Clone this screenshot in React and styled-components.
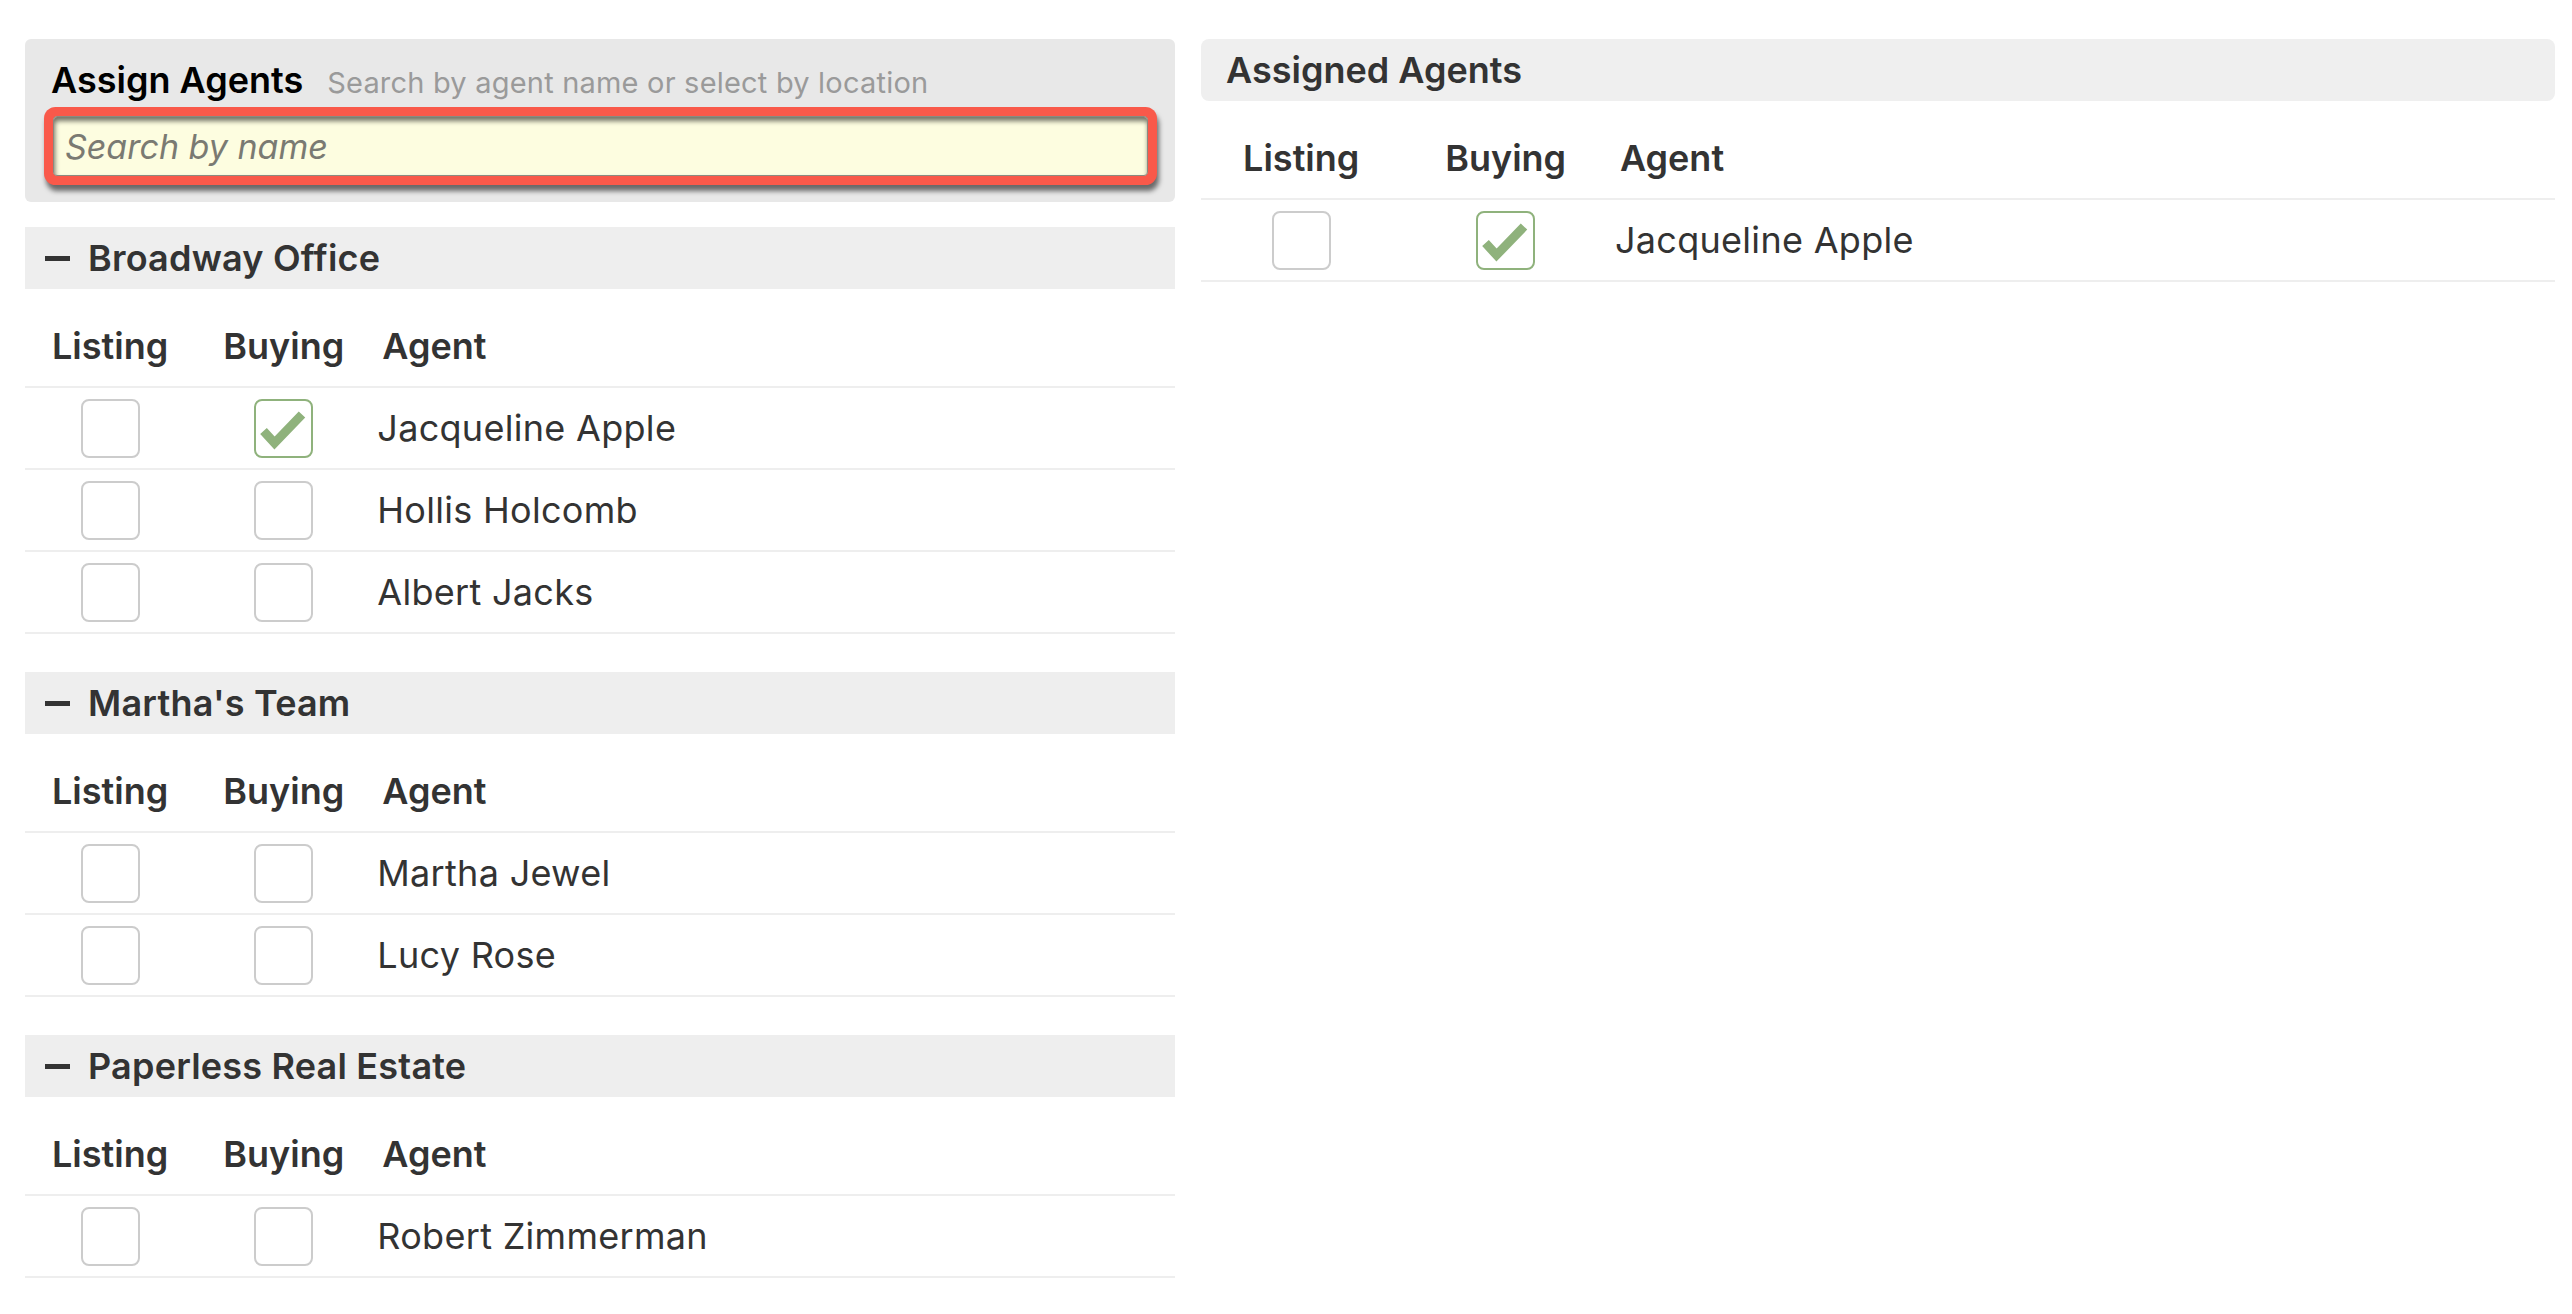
import React from 'react'
import styled, { createGlobalStyle } from 'styled-components'

const groups = [
  {
    name: 'Broadway Office',
    agents: [
      { name: 'Jacqueline Apple', listing: false, buying: true },
      { name: 'Hollis Holcomb', listing: false, buying: false },
      { name: 'Albert Jacks', listing: false, buying: false },
    ],
  },
  {
    name: "Martha's Team",
    agents: [
      { name: 'Martha Jewel', listing: false, buying: false },
      { name: 'Lucy Rose', listing: false, buying: false },
    ],
  },
  {
    name: 'Paperless Real Estate',
    agents: [{ name: 'Robert Zimmerman', listing: false, buying: false }],
  },
]

const assigned = [{ name: 'Jacqueline Apple', listing: false, buying: true }]

const Check = ({ checked }) => (
  <Box checked={checked}>
    {checked && (
      <svg width="55" height="55" viewBox="0 0 55 55">
        <polyline
          points="7.5,30 18.5,42 46,13.5"
          fill="none"
          stroke="#8fb27c"
          strokeWidth="9"
          strokeLinecap="butt"
          strokeLinejoin="miter"
        />
      </svg>
    )}
  </Box>
)

const AgentTable = ({ agents }) => (
  <div>
    <HeadRow>
      <HeadCell center>Listing</HeadCell>
      <HeadCell center>Buying</HeadCell>
      <HeadCell>Agent</HeadCell>
    </HeadRow>
    {agents.map((a) => (
      <Row key={a.name}>
        <Cell>
          <Check checked={a.listing} />
        </Cell>
        <Cell>
          <Check checked={a.buying} />
        </Cell>
        <Name>{a.name}</Name>
      </Row>
    ))}
  </div>
)

const App = () => {
  return (
    <>
      <GlobalStyle />
      <Page>
        <Column>
          <SearchBox>
            <TitleRow>
              <Title>Assign Agents</Title>
              <Hint>Search by agent name or select by location</Hint>
            </TitleRow>
            <SearchInput placeholder="Search by name" />
          </SearchBox>
          {groups.map((g) => (
            <Group key={g.name}>
              <GroupHeader>
                <Minus />
                {g.name}
              </GroupHeader>
              <AgentTable agents={g.agents} />
            </Group>
          ))}
        </Column>
        <Column>
          <AssignedHeader>Assigned Agents</AssignedHeader>
          <AgentTable agents={assigned} />
        </Column>
      </Page>
    </>
  )
}

export default App

const GlobalStyle = createGlobalStyle`
  body {
    margin: 0;
    background: #fff;
    font-family: Inter, "Liberation Sans", sans-serif;
    color: #333;
  }
`

const Page = styled.div`
  display: grid;
  grid-template-columns: 1150px 1fr;
  gap: 26px;
  align-items: start;
  padding: 39px 17px 40px 25px;
`

const Column = styled.div`
  display: flex;
  flex-direction: column;
`

const SearchBox = styled.div`
  background: #e8e8e8;
  border-radius: 6px;
  padding: 21px 27px 26px 28px;
`

const TitleRow = styled.div`
  display: flex;
  align-items: baseline;
  gap: 24px;
  height: 40px;
  line-height: 40px;
`

const Title = styled.span`
  font-size: 36px;
  font-weight: 600;
  color: #000;
  margin-left: -2px;
`

const Hint = styled.span`
  font-size: 29px;
  letter-spacing: 0.2px;
  font-weight: 400;
  color: #9a9a9a;
`

const SearchInput = styled.input`
  display: block;
  box-sizing: border-box;
  width: 100%;
  height: 60px;
  margin-top: 16px;
  padding: 0 11px;
  border: 1px solid #8a8a80;
  border-radius: 4px;
  background: #fdfde0;
  font-family: Inter, "Liberation Sans", sans-serif;
  font-size: 34px;
  box-shadow: inset 1px 4px 5px rgba(0, 0, 0, 0.55), 0 0 0 9px #f9594a,
    2px 6px 5px 9px rgba(0, 0, 0, 0.55);
  outline: none;

  &::placeholder {
    color: #7a7a72;
    font-style: italic;
  }
`

const Group = styled.section`
  margin-top: 38px;

  &:nth-child(2) {
    margin-top: 25px;
  }
`

const GroupHeader = styled.div`
  display: flex;
  align-items: center;
  gap: 18px;
  height: 62px;
  padding-left: 20px;
  background: #eeeeee;
  font-size: 36px;
  letter-spacing: 0.2px;
  font-weight: 600;
  color: #333;
`

const Minus = styled.span`
  width: 25px;
  height: 5px;
  background: #333;
`

const AssignedHeader = styled.div`
  display: flex;
  align-items: center;
  height: 62px;
  padding-left: 25px;
  background: #efefef;
  border-radius: 8px;
  font-size: 36px;
  font-weight: 600;
  color: #333;
`

const HeadRow = styled.div`
  display: grid;
  grid-template-columns: 14.8% 15.4% 1fr;
  padding: 35px 0 18px;
  border-bottom: 2px solid #eeeeee;
  line-height: 44px;
`

const HeadCell = styled.div`
  font-size: 36px;
  font-weight: 600;
  color: #333;
  text-align: ${(p) => (p.center ? 'center' : 'left')};
  padding-left: ${(p) => (p.center ? '0' : '10px')};
`

const Row = styled.div`
  display: grid;
  grid-template-columns: 14.8% 15.4% 1fr;
  align-items: center;
  height: 80px;
  border-bottom: 2px solid #eeeeee;
`

const Cell = styled.div`
  display: flex;
  justify-content: center;
`

const Name = styled.div`
  padding-left: 5px;
  font-size: 36px;
  letter-spacing: 0.3px;
  font-weight: 400;
  color: #333;
`

const Box = styled.div`
  box-sizing: border-box;
  width: 59px;
  height: 59px;
  border: 2px solid ${(p) => (p.checked ? '#8fb27c' : '#cccccc')};
  border-radius: 8px;
  display: flex;
  align-items: center;
  justify-content: center;
`
